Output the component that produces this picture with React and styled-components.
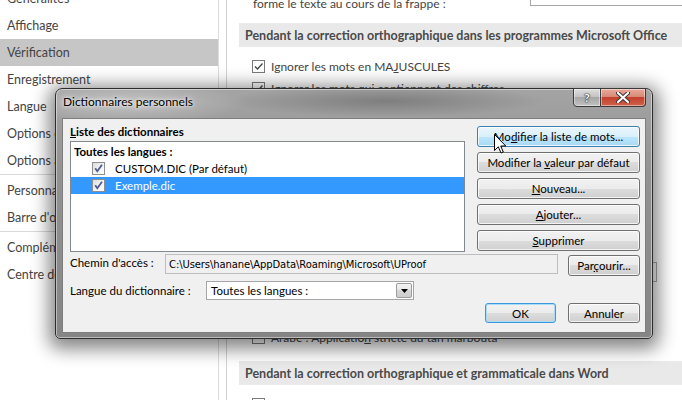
import React from "react";
import styled, { createGlobalStyle } from "styled-components";

const Global = createGlobalStyle`
  body { margin: 0; background: #fff; overflow: hidden; }
  * { box-sizing: border-box; }
`;

const Page = styled.div`
  position: relative;
  display: flex;
  width: 682px;
  height: 400px;
  overflow: hidden;
  background: #fff;
  font-family: Lato, "Open Sans", sans-serif;
  color: #444;
`;

/* ---------- Word options window (behind) ---------- */

const Nav = styled.nav`
  width: 219px;
  flex-shrink: 0;
  margin-right: 7px;
  border-right: 1px solid #dcdcdc;
`;

const NavList = styled.div`
  display: flex;
  flex-direction: column;
  margin-top: -15px;
`;

const NavItem = styled.div`
  height: 27px;
  display: flex;
  align-items: center;
  padding-left: 7px;
  font-size: 12.5px;
  white-space: nowrap;
  background: ${(p) => (p.$active ? "#c6c6c6" : "transparent")};
`;

const NavRule = styled.div`
  height: 1px;
  margin-bottom: 2px;
  background: #d9d9d9;
`;

const Pane = styled.main`
  flex: 1;
  min-width: 0;
  border-left: 1px solid #d2d2d2;
  padding-left: 12px;
  overflow: hidden;
`;

const PaneInner = styled.div`
  display: flex;
  flex-direction: column;
  margin-top: -20px;
`;

const TopRow = styled.div`
  display: flex;
  align-items: flex-start;
  height: 30px;
`;

const TopLabel = styled.div`
  width: 291px;
  flex-shrink: 0;
  padding-left: 14px;
  font-size: 12px;
  line-height: 16px;
`;

const TopCombo = styled.div`
  flex: 1;
  height: 23px;
  margin-top: 3px;
  margin-right: -10px;
  border: 1px solid #a5a5a5;
  background: #fff;
`;

const SectionHead = styled.div`
  margin-top: 13px;
  height: 24px;
  display: flex;
  align-items: center;
  padding-left: 6px;
  background: #e9e9e9;
  font-weight: 700;
  font-size: 12.5px;
  color: #4a4a4a;
  white-space: nowrap;
`;

const CheckRow = styled.div`
  display: flex;
  align-items: center;
  gap: 6px;
  height: 22px;
  margin-top: ${(p) => p.$top || 0}px;
  padding-left: 13px;
  font-size: 12px;
  white-space: nowrap;
`;

const FlatBox = styled.span`
  width: 13px;
  height: 13px;
  flex-shrink: 0;
  display: flex;
  align-items: center;
  justify-content: center;
  border: 1px solid #7a7a7a;
  background: #fff;
`;

const PaneButtonRow = styled.div`
  height: 40px;
  display: flex;
  align-items: center;
  padding-left: 13px;
`;

const PaneButton = styled.div`
  height: 23px;
  padding: 0 12px;
  display: flex;
  align-items: center;
  border: 1px solid #acacac;
  background: #e1e1e1;
  font-size: 12px;
`;

const ComboRow = styled.div`
  height: 30px;
  display: flex;
  align-items: center;
  padding-left: 13px;
  font-size: 12px;
  white-space: nowrap;
`;

const PaneCombo = styled.div`
  width: ${(p) => p.$w}px;
  height: 20px;
  margin-left: auto;
  margin-right: ${(p) => p.$right}px;
  padding-left: 4px;
  display: flex;
  align-items: center;
  border: 1px solid #ababab;
  background: #fff;
  font-size: 12px;
`;

/* ---------- Dialog ---------- */

const Dialog = styled.div`
  position: absolute;
  left: 55px;
  top: 88px;
  width: 598px;
  height: 251px;
  z-index: 2;
  display: flex;
  flex-direction: column;
  padding: 0 6px 5px;
  border: 1px solid #2d2d2d;
  border-radius: 7px 7px 5px 5px;
  background:
    radial-gradient(ellipse 120px 22px at 70px 14px, rgba(255, 255, 255, 0.35), transparent),
    radial-gradient(ellipse 160px 16px at 330px 12px, rgba(60, 60, 60, 0.35), transparent),
    linear-gradient(180deg, #a4a4a4 0%, #929292 35%, #858585 100%);
  box-shadow: 0 4px 18px 6px rgba(0, 0, 0, 0.48),
    inset 0 0 0 1px rgba(255, 255, 255, 0.45);
  font-family: Lato, "Open Sans", sans-serif;
  font-size: 11.5px;
  color: #000;
`;

const TitleBar = styled.div`
  height: 29px;
  display: flex;
  justify-content: space-between;
  align-items: flex-start;
`;

const Title = styled.div`
  margin-top: 6px;
  padding-left: 1px;
  font-size: 12px;
  line-height: 14px;
  text-shadow: 0 0 6px #fff, 0 0 3px rgba(255, 255, 255, 0.9);
`;

const Caption = styled.div`
  display: flex;
  margin-top: -1px;
`;

const CaptionButton = styled.div`
  height: 19px;
  width: ${(p) => (p.$close ? 45 : 28)}px;
  display: flex;
  align-items: center;
  justify-content: center;
  border: 1px solid #3a3a3a;
  border-left: ${(p) => (p.$close ? "none" : "1px solid #3a3a3a")};
  border-radius: ${(p) => (p.$close ? "0 0 4px 0" : "0 0 0 4px")};
  background: ${(p) =>
    p.$close
      ? "linear-gradient(180deg, #e9a99a 0%, #d88a78 45%, #c4412e 50%, #d0614a 100%)"
      : "linear-gradient(180deg, #dedede 0%, #c4c4c4 45%, #a7a7a7 50%, #c2c2c2 100%)"};
  box-shadow: inset 0 0 0 1px rgba(255, 255, 255, 0.45);
  color: #fff;
  font-weight: 700;
  font-size: 12px;
  text-shadow: 0 0 1px #222, 0 0 1px #222, 0 0 2px #333;
`;

const Client = styled.div`
  flex: 1;
  display: flex;
  flex-direction: column;
  padding: 4px 5px 8px 7px;
  border: 1px solid #7e7e7e;
  background: #f0f0f0;
`;

const TopSection = styled.div`
  display: flex;
  gap: 12px;
  height: 129px;
`;

const ListCol = styled.div`
  flex: 1;
  display: flex;
  flex-direction: column;
`;

const GroupLabel = styled.div`
  height: 18px;
  line-height: 18px;
  font-weight: 700;
`;

const ListBox = styled.div`
  flex: 1;
  padding-top: 1px;
  border: 1px solid #828790;
  background: #fff;
`;

const ListHeader = styled.div`
  height: 17px;
  display: flex;
  align-items: center;
  padding-left: 3px;
  font-weight: 700;
`;

const ListItem = styled.div`
  height: 17px;
  display: flex;
  align-items: center;
  gap: 10px;
  padding-left: 21px;
  background: ${(p) => (p.$selected ? "#3399ff" : "transparent")};
  color: ${(p) => (p.$selected ? "#fff" : "#000")};
`;

const CheckBox = styled.span`
  width: 13px;
  height: 13px;
  display: flex;
  align-items: center;
  justify-content: center;
  border: 1px solid #8e8f8f;
  background: linear-gradient(135deg, #dcdcdc 0%, #f6f6f6 60%, #fff 100%);
`;

const ButtonCol = styled.div`
  width: 163px;
  display: flex;
  flex-direction: column;
  gap: 5px;
  padding-top: 3px;
`;

const WinButton = styled.button`
  width: ${(p) => (p.$w ? `${p.$w}px` : "100%")};
  height: ${(p) => p.$h || 21}px;
  flex-shrink: 0;
  margin-top: ${(p) => p.$top || 0}px;
  padding: 0;
  border: 1px solid ${(p) => (p.$hover ? "#3c7fb1" : p.$default ? "#3c97dd" : "#707070")};
  border-radius: 3px;
  background: ${(p) =>
    p.$hover
      ? "linear-gradient(180deg, #eaf6fd 0%, #d9f0fc 50%, #bee6fd 50%, #a7d9f5 100%)"
      : "linear-gradient(180deg, #f2f2f2 0%, #ebebeb 50%, #dddddd 50%, #cfcfcf 100%)"};
  box-shadow: inset 0 0 0 1px ${(p) => (p.$default ? "#a9dcf6" : "rgba(255,255,255,0.75)")};
  font-family: inherit;
  font-size: 11.5px;
  color: #000;
  white-space: nowrap;
`;

const FieldRow = styled.div`
  display: flex;
  align-items: flex-start;
  height: ${(p) => p.$h}px;
  margin-top: ${(p) => p.$top}px;
`;

const FieldLabel = styled.div`
  width: ${(p) => p.$w}px;
  flex-shrink: 0;
  line-height: ${(p) => p.$lh}px;
`;

const PathField = styled.div`
  flex: 1;
  height: 20px;
  margin-right: 10px;
  padding-left: 3px;
  display: flex;
  align-items: center;
  border: 1px solid #bdbdbd;
  background: #f0f0f0;
  font-family: "DejaVu Sans", Verdana, sans-serif;
  font-size: 10px;
  letter-spacing: -0.1px;
  white-space: nowrap;
  overflow: hidden;
`;

const Combo = styled.div`
  width: 208px;
  height: 19px;
  display: flex;
  align-items: center;
  padding-left: 4px;
  border: 1px solid #a6a6a6;
  background: #fff;
`;

const ComboText = styled.span`
  flex: 1;
`;

const DropButton = styled.span`
  width: 16px;
  height: 15px;
  margin-right: 1px;
  display: flex;
  align-items: center;
  justify-content: center;
  border: 1px solid #9d9d9d;
  border-radius: 2px;
  background: linear-gradient(180deg, #f3f3f3 0%, #e6e6e6 50%, #d6d6d6 50%, #cdcdcd 100%);
`;

const BottomRow = styled.div`
  display: flex;
  justify-content: flex-end;
  gap: 12px;
  margin-top: 3px;
  height: 20px;
`;

const Cursor = styled.svg`
  position: absolute;
  left: 494px;
  top: 134px;
  z-index: 3;
`;

const FlatCheck = () => (
  <svg width="11" height="11" viewBox="0 0 11 11">
    <path d="M2 5.5 L4.5 8 L9.5 2.5" fill="none" stroke="#444" strokeWidth="1.3" />
  </svg>
);

const BlueCheck = () => (
  <svg width="11" height="11" viewBox="0 0 11 11">
    <path d="M2.2 5.2 L4.3 8.2 L9 1.8" fill="none" stroke="#4a5d94" strokeWidth="1.8" />
  </svg>
);

const paneChecks = [
  ["Ignorer les mots en MA", "J", "USCULES"],
  ["Ignorer les mots qui contiennent des chiffres"],
  ["Ignorer les adresses Internet et de fichiers"],
  ["Signaler les répétitions"],
  ["Appliquer les majuscules accentuées en français"],
  ["Suggérer à partir du dictionnaire principal uniquement"],
];

const navItems = [
  "Généralités",
  "Affichage",
  "Vérification",
  "Enregistrement",
  "Langue",
  "Options d'ergonomie",
  "Options avancées",
  null,
  "Personnaliser le ruban",
  "Barre d'outils Accès rapide",
  null,
  "Compléments",
  "Centre de gestion de la confidentialité",
];

export default function App() {
  return (
    <Page>
      <Global />
      <Nav>
        <NavList>
          {navItems.map((item, i) =>
            item ? (
              <NavItem key={i} $active={item === "Vérification"}>
                {item}
              </NavItem>
            ) : (
              <NavRule key={i} />
            )
          )}
        </NavList>
      </Nav>

      <Pane>
        <PaneInner>
          <TopRow>
            <TopLabel>
              Lors de la correction de l'orthographe, le texte
              <br />
              forme le texte au cours de la frappe :
            </TopLabel>
            <TopCombo />
          </TopRow>
          <SectionHead>
            Pendant la correction orthographique dans les programmes Microsoft Office
          </SectionHead>
          {paneChecks.map((c, i) => (
            <CheckRow key={i} $top={i === 0 ? 8 : 0}>
              <FlatBox>
                <FlatCheck />
              </FlatBox>
              <span>
                {c[0]}
                {c[1] && <u>{c[1]}</u>}
                {c[2]}
              </span>
            </CheckRow>
          ))}
          <PaneButtonRow>
            <PaneButton>Dictionnaires personnels...</PaneButton>
          </PaneButtonRow>
          <ComboRow>
            Modes du français :
            <PaneCombo $w={200} $right={60}>
              Orthographe traditionnelle et rectifiée
            </PaneCombo>
          </ComboRow>
          <ComboRow>
            Modes de l'espagnol :
            <PaneCombo $w={200} $right={25}>
              Formes tutoiement et voseo
            </PaneCombo>
          </ComboRow>
          <CheckRow $top={17}>
            <FlatBox />
            <span>Arabe : Application stricte du alif hamza</span>
          </CheckRow>
          <CheckRow>
            <FlatBox />
            <span>
              Arabe : Applicatio<u>n</u> stricte du tah marbouta
            </span>
          </CheckRow>
          <SectionHead>
            Pendant la correction orthographique et grammaticale dans Word
          </SectionHead>
          <CheckRow $top={8}>
            <FlatBox>
              <FlatCheck />
            </FlatBox>
            <span>Vérifier l'orthographe au cours de la frappe</span>
          </CheckRow>
        </PaneInner>
      </Pane>

      <Dialog>
        <TitleBar>
          <Title>Dictionnaires personnels</Title>
          <Caption>
            <CaptionButton>?</CaptionButton>
            <CaptionButton $close>
              <svg width="14" height="11" viewBox="0 0 14 11">
                <path d="M2 1 L12 10 M12 1 L2 10" stroke="#333" strokeWidth="4" strokeLinecap="round" />
                <path d="M2 1 L12 10 M12 1 L2 10" stroke="#fff" strokeWidth="2.2" strokeLinecap="round" />
              </svg>
            </CaptionButton>
          </Caption>
        </TitleBar>

        <Client>
          <TopSection>
            <ListCol>
              <GroupLabel>
                <u>L</u>iste des dictionnaires
              </GroupLabel>
              <ListBox>
                <ListHeader>Toutes les langues :</ListHeader>
                <ListItem>
                  <CheckBox>
                    <BlueCheck />
                  </CheckBox>
                  CUSTOM.DIC (Par défaut)
                </ListItem>
                <ListItem $selected>
                  <CheckBox>
                    <BlueCheck />
                  </CheckBox>
                  Exemple.dic
                </ListItem>
              </ListBox>
            </ListCol>
            <ButtonCol>
              <WinButton $hover>
                Mo<u>d</u>ifier la liste de mots...
              </WinButton>
              <WinButton>
                Modifier la <u>v</u>aleur par défaut
              </WinButton>
              <WinButton>
                <u>N</u>ouveau...
              </WinButton>
              <WinButton>
                <u>A</u>jouter...
              </WinButton>
              <WinButton>
                <u>S</u>upprimer
              </WinButton>
            </ButtonCol>
          </TopSection>

          <FieldRow $h={22} $top={2}>
            <FieldLabel $w={95} $lh={17}>
              Chemin d'accès :
            </FieldLabel>
            <PathField>C:\Users\hanane\AppData\Roaming\Microsoft\UProof</PathField>
            <WinButton $w={72} $top={1}>
              Par<u>ç</u>ourir...
            </WinButton>
          </FieldRow>

          <FieldRow $h={19} $top={5}>
            <FieldLabel $w={136} $lh={19}>
              Lan<u>g</u>ue du dictionnaire :
            </FieldLabel>
            <Combo>
              <ComboText>Toutes les langues :</ComboText>
              <DropButton>
                <svg width="7" height="4" viewBox="0 0 7 4">
                  <path d="M0 0 H7 L3.5 4 Z" fill="#000" />
                </svg>
              </DropButton>
            </Combo>
          </FieldRow>

          <BottomRow>
            <WinButton $w={71} $h={20} $default>
              OK
            </WinButton>
            <WinButton $w={72} $h={20}>
              Annuler
            </WinButton>
          </BottomRow>
        </Client>
      </Dialog>

      <Cursor width="13" height="21" viewBox="0 0 13 21">
        <path
          d="M0.5 0.5 L0.5 16.5 L4.3 12.8 L7 19 L9.3 18 L6.7 12 L11.8 12 Z"
          fill="#fff"
          stroke="#000"
          strokeWidth="1"
          strokeLinejoin="round"
        />
      </Cursor>
    </Page>
  );
}
